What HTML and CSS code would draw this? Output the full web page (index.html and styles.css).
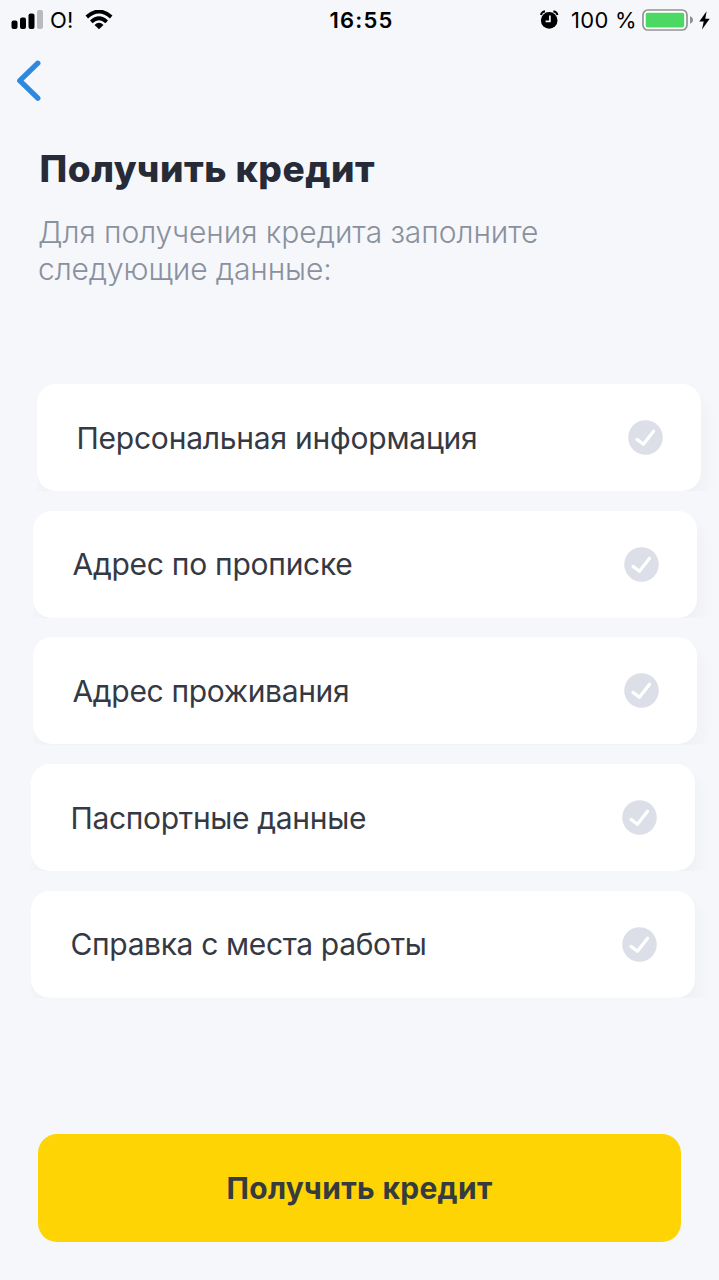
FILE: index.html
```html
<!DOCTYPE html>
<html lang="ru">
<head>
<meta charset="utf-8">
<title>Получить кредит</title>
<link rel="stylesheet" href="styles.css">
</head>
<body>
<div class="screen">
  <div class="status">
    <div class="status-left">
      <svg class="signal" width="33" height="20" viewBox="0 0 33 20"><rect x="0.5" y="10.5" width="6" height="8.5" rx="2"/><rect x="9" y="7.5" width="6" height="11.5" rx="2"/><rect x="17.5" y="3.5" width="6" height="15.5" rx="2"/><rect x="26" y="0" width="6" height="19" rx="2" fill="#b9babd"/></svg>
      <span class="carrier">O!</span>
      <svg class="wifi" width="28" height="20" viewBox="0 0 28 20"><g fill="none" stroke="#000" stroke-width="3.8"><path d="M1.8 7Q14-4 26.2 7"/><path d="M6.3 11.9Q14 4.7 21.7 11.9"/></g><path d="M9.5 14.9Q14 10.8 18.5 14.9L14 19.2Z"/></svg>
    </div>
    <span class="time">16:55</span>
    <div class="status-right">
      <svg class="alarm" width="20" height="20" viewBox="0 0 20 20"><circle cx="9.2" cy="10.4" r="8.3"/><path d="M.9 5Q1.6 2 5 1.3M13.4 1.3Q16.8 2 17.5 5" fill="none" stroke="#000" stroke-width="1.9"/><path d="M9.9 5.4V11.3H5.6" fill="none" stroke="#f5f7fb" stroke-width="1.7"/></svg>
      <span class="percent">100 %</span>
      <svg class="battery" width="52" height="22" viewBox="0 0 52 22"><rect x="1" y="1" width="44" height="20" rx="5" fill="#fff" stroke="#929396" stroke-width="1.7"/><rect x="3.7" y="3.8" width="38.5" height="14.6" rx="1.8" fill="#4bd964"/><path d="M48 7.3Q51 8.3 51 11T48 14.7Z" fill="#8f9093"/></svg>
      <svg class="bolt" width="11" height="19" viewBox="0 0 11 19"><path d="M7.6.3L.3 10.6H4.7L3 18.5L10.7 7.7H6.3Z"/></svg>
    </div>
  </div>
  <svg class="back" width="26" height="42" viewBox="0 0 26 42"><path d="M21.8 3.2L3.8 20.7L21.8 38.2" fill="none" stroke="#2f88df" stroke-width="5.3" stroke-linecap="round" stroke-linejoin="round"/></svg>
  <h1 class="title">Получить кредит</h1>
  <p class="intro"><span class="intro-a">Для получения кредита заполните</span><br><span class="intro-b">следующие данные:</span></p>
  <div class="list">
    <div class="card card-first"><span class="label l1">Персональная информация</span><svg class="check" viewBox="0 0 35 35"><circle cx="17.5" cy="17.5" r="17.3"/><path d="M9 19.4L15.4 24.2L25.6 11.3"/></svg></div>
    <div class="card card-mid"><span class="label l2">Адрес по прописке</span><svg class="check" viewBox="0 0 35 35"><circle cx="17.5" cy="17.5" r="17.3"/><path d="M9 19.4L15.4 24.2L25.6 11.3"/></svg></div>
    <div class="card card-mid"><span class="label l3">Адрес проживания</span><svg class="check" viewBox="0 0 35 35"><circle cx="17.5" cy="17.5" r="17.3"/><path d="M9 19.4L15.4 24.2L25.6 11.3"/></svg></div>
    <div class="card"><span class="label l4">Паспортные данные</span><svg class="check" viewBox="0 0 35 35"><circle cx="17.5" cy="17.5" r="17.3"/><path d="M9 19.4L15.4 24.2L25.6 11.3"/></svg></div>
    <div class="card"><span class="label l5">Справка с места работы</span><svg class="check" viewBox="0 0 35 35"><circle cx="17.5" cy="17.5" r="17.3"/><path d="M9 19.4L15.4 24.2L25.6 11.3"/></svg></div>
  </div>
  <button class="submit">Получить кредит</button>
</div>
</body>
</html>
```
FILE: styles.css
```css
* { box-sizing: border-box; }
body { margin: 0; background: #f5f7fb; font-family: Inter, Roboto, sans-serif; }
.screen { width: 719px; height: 1280px; overflow: hidden; display: flex; flex-direction: column; align-items: flex-start; background: #f5f7fb; }
.status { width: 100%; height: 40px; display: grid; grid-template-columns: 1fr auto 1fr; align-items: center; padding: 0 9px 0 11px; font-size: 22px; line-height: 40px; color: #000; }
.status-left, .status-right { display: flex; align-items: center; height: 40px; }
.status-right { justify-content: flex-end; }
.carrier { margin-left: 6px; letter-spacing: 0.3px; }
.wifi { margin-left: 11px; }
.time { font-weight: 600; letter-spacing: 1.2px; padding-left: 2px; }
.alarm { margin-right: 11px; }
.percent { letter-spacing: 0.3px; margin-right: 5px; }
.bolt { margin-left: 5px; }
.back { margin: 20px 0 0 16px; }
.title { margin: 44px 0 0 39.5px; font-size: 37px; line-height: 46px; font-weight: 800; letter-spacing: 0.53px; color: #272b37; white-space: nowrap; }
.intro { margin: 22px 0 0 38px; font-size: 30px; line-height: 37px; font-weight: 300; color: #8a919e; white-space: nowrap; }
.intro-a { letter-spacing: -0.07px; }
.intro-b { letter-spacing: -0.13px; }
.list { width: 719px; margin-top: 96px; padding-left: 31px; display: flex; flex-direction: column; gap: 19.7px; }
/* The shadow stops at the lower edge of each card */
.card { width: 664px; height: 107px; padding: 0 38px 0 39.5px; display: flex; align-items: center; justify-content: space-between; background: #fff; border-radius: 19px; box-shadow: 4px 12px 16px rgba(45, 45, 60, 0.035); clip-path: inset(0 -18px 0 0); }
.card-first { margin-left: 6px; }
.card-mid { margin-left: 2px; }
.label { font-size: 30px; line-height: 40px; color: #353944; white-space: nowrap; }
.l1 { letter-spacing: -0.23px; }
.l2 { letter-spacing: -0.27px; }
.l3 { letter-spacing: -0.34px; }
.l4 { letter-spacing: -0.33px; }
.l5 { letter-spacing: -0.36px; }
.check { width: 35px; height: 35px; }
.check circle { fill: #dcdfe7; }
.check path { fill: none; stroke: #fff; stroke-width: 3.3; stroke-linecap: round; stroke-linejoin: round; }
.submit { width: 643px; height: 108px; margin: 136px 0 0 38px; padding: 0; border: 0; border-radius: 19px; background: #ffd405; color: #353b3e; font: 700 30px/40px Inter, Roboto, sans-serif; letter-spacing: 0.3px; }
```
